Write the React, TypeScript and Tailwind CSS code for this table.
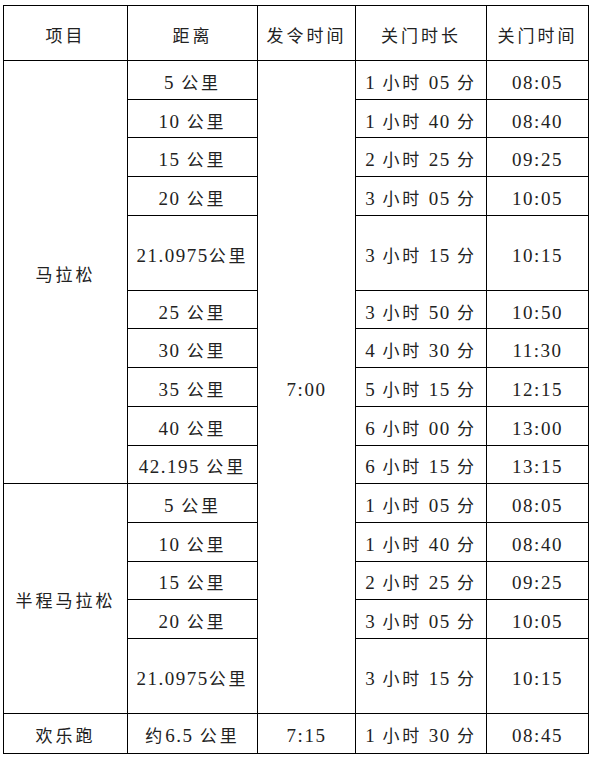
import React from "react";

type Row = {
  dist: string;
  dur: string;
  close: string;
  tall?: boolean;
};

const marathon: Row[] = [
  { dist: "5 公里", dur: "1 小时 05 分", close: "08:05" },
  { dist: "10 公里", dur: "1 小时 40 分", close: "08:40" },
  { dist: "15 公里", dur: "2 小时 25 分", close: "09:25" },
  { dist: "20 公里", dur: "3 小时 05 分", close: "10:05" },
  { dist: "21.0975公里", dur: "3 小时 15 分", close: "10:15", tall: true },
  { dist: "25 公里", dur: "3 小时 50 分", close: "10:50" },
  { dist: "30 公里", dur: "4 小时 30 分", close: "11:30" },
  { dist: "35 公里", dur: "5 小时 15 分", close: "12:15" },
  { dist: "40 公里", dur: "6 小时 00 分", close: "13:00" },
  { dist: "42.195 公里", dur: "6 小时 15 分", close: "13:15" },
];

const half: Row[] = [
  { dist: "5 公里", dur: "1 小时 05 分", close: "08:05" },
  { dist: "10 公里", dur: "1 小时 40 分", close: "08:40" },
  { dist: "15 公里", dur: "2 小时 25 分", close: "09:25" },
  { dist: "20 公里", dur: "3 小时 05 分", close: "10:05" },
  { dist: "21.0975公里", dur: "3 小时 15 分", close: "10:15", tall: true },
];

// CJK runs get wider spacing than the digits, like the Word original
const Txt = ({ s }: { s: string }) => {
  const parts = s.match(/[\u4e00-\u9fff]+|[^\u4e00-\u9fff]+/g) ?? [];
  return (
    <>
      {parts.map((p, i) =>
        /[\u4e00-\u9fff]/.test(p) ? (
          <span key={i} className="tracking-[3px]">
            {p}
          </span>
        ) : (
          <span key={i} className="text-[19px] tracking-[1.5px]">
            {p}
          </span>
        )
      )}
    </>
  );
};

const cell = "border border-black text-center align-middle px-0 pt-[7px] pb-0";

const App = () => {
  const rowH = (r: Row) => (r.tall ? "h-[75px]" : "h-[38.7px]");

  return (
    <div className="w-[592px] h-[757px] bg-white pt-[5px] pl-[3px]">
      <table className="table-fixed border-collapse w-[585px] text-[17px] leading-[22px] text-[#222] font-['Liberation_Serif','Noto_Sans_CJK_SC',serif]">
        <colgroup>
          <col className="w-[124px]" />
          <col className="w-[130px]" />
          <col className="w-[98px]" />
          <col className="w-[131px]" />
          <col className="w-[102px]" />
        </colgroup>
        <tbody>
          <tr className="h-[55px]">
            <td className={cell}><Txt s="项目" /></td>
            <td className={cell}><Txt s="距离" /></td>
            <td className={cell}><Txt s="发令时间" /></td>
            <td className={cell}><Txt s="关门时长" /></td>
            <td className={cell}><Txt s="关门时间" /></td>
          </tr>

          {marathon.map((r, i) => (
            <tr key={"m" + i} className={rowH(r)}>
              {i === 0 && (
                <td rowSpan={marathon.length} className={cell}>
                  <Txt s="马拉松" />
                </td>
              )}
              <td className={cell}><Txt s={r.dist} /></td>
              {i === 0 && (
                <td rowSpan={marathon.length + half.length} className={cell}>
                  <Txt s="7:00" />
                </td>
              )}
              <td className={cell}><Txt s={r.dur} /></td>
              <td className={cell}><Txt s={r.close} /></td>
            </tr>
          ))}

          {half.map((r, i) => (
            <tr key={"h" + i} className={rowH(r)}>
              {i === 0 && (
                <td rowSpan={half.length} className={cell}>
                  <Txt s="半程马拉松" />
                </td>
              )}
              <td className={cell}><Txt s={r.dist} /></td>
              <td className={cell}><Txt s={r.dur} /></td>
              <td className={cell}><Txt s={r.close} /></td>
            </tr>
          ))}

          <tr className="h-[40px]">
            <td className={cell}><Txt s="欢乐跑" /></td>
            <td className={cell}><Txt s="约6.5 公里" /></td>
            <td className={cell}><Txt s="7:15" /></td>
            <td className={cell}><Txt s="1 小时 30 分" /></td>
            <td className={cell}><Txt s="08:45" /></td>
          </tr>
        </tbody>
      </table>
    </div>
  );
};

export default App;
